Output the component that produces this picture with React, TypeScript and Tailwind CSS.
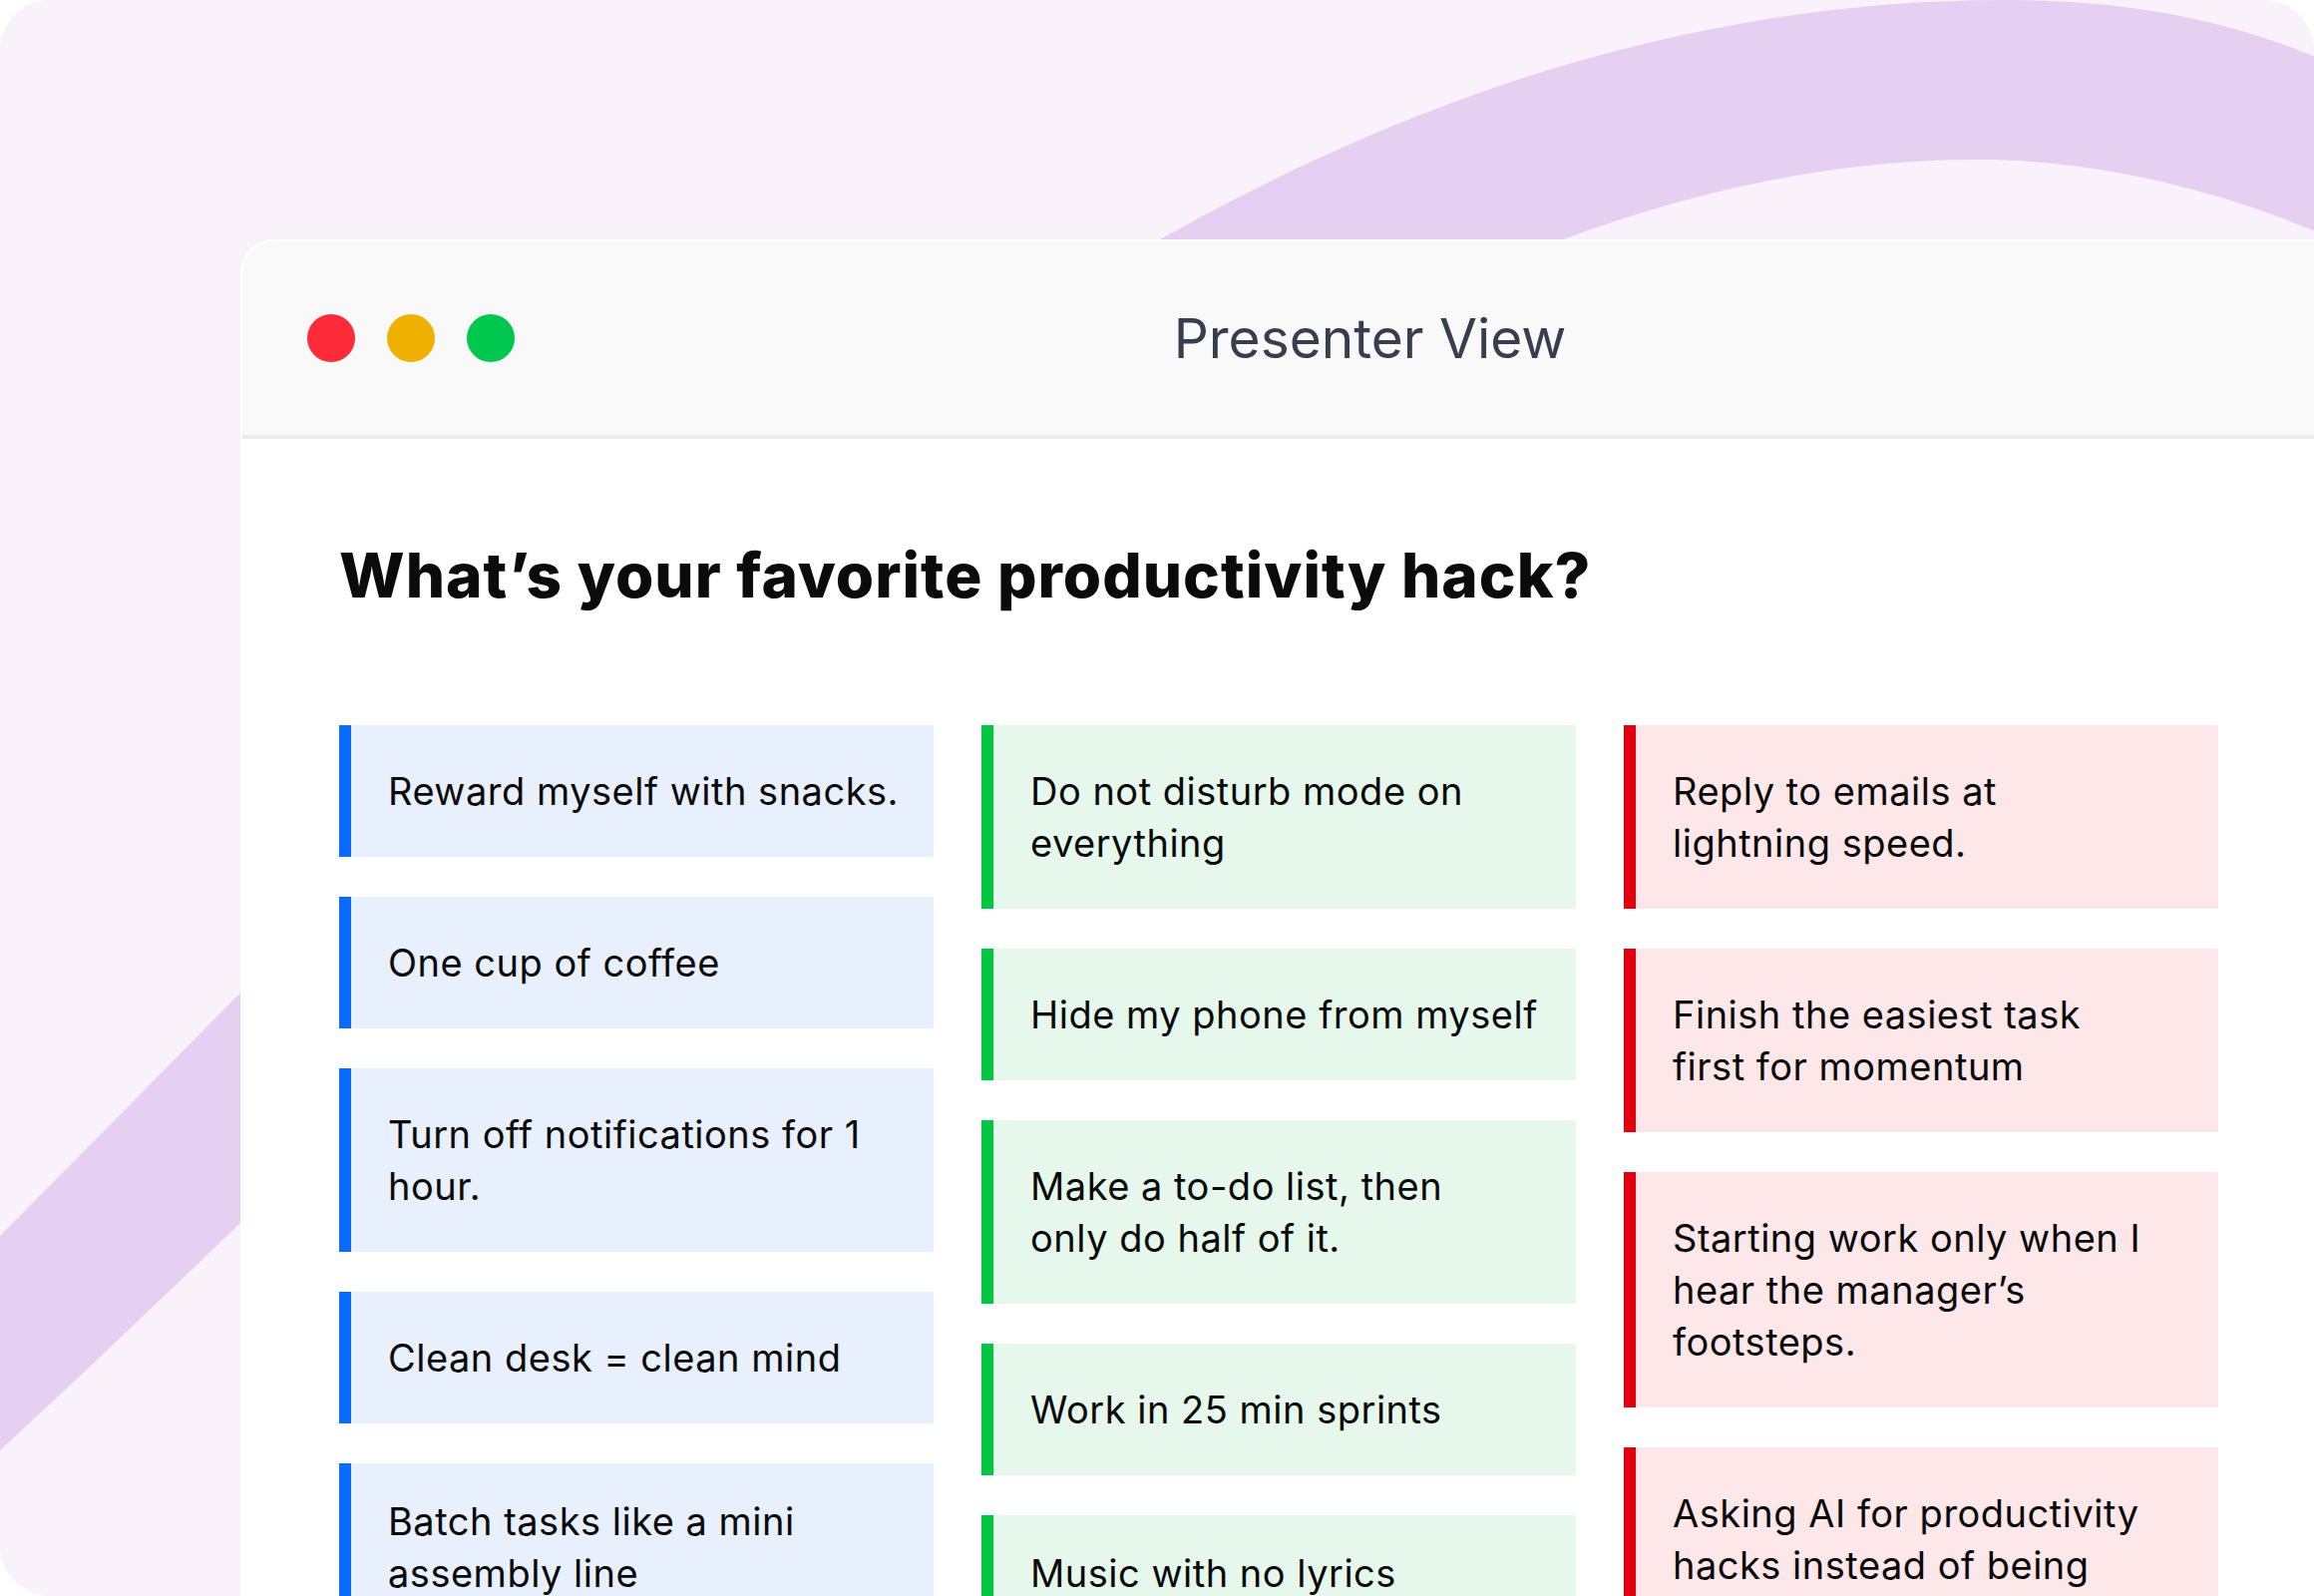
import { FC } from 'react';

type Tone = 'blue' | 'green' | 'red';

interface Answer {
    lines: string[];
    tight?: boolean;
}

interface Column {
    tone: Tone;
    items: Answer[];
}

const toneClass: Record<Tone, string> = {
    blue: 'border-[#0a6cff] bg-[#e8effd]',
    green: 'border-[#00c642] bg-[#e6f8ec]',
    red: 'border-[#e2000f] bg-[#fde7e9]',
};

const columns: Column[] = [
    {
        tone: 'blue',
        items: [
            { lines: ['Reward myself with snacks.'] },
            { lines: ['One cup of coffee'] },
            { lines: ['Turn off notifications for 1', 'hour.'] },
            { lines: ['Clean desk = clean mind'] },
            { lines: ['Batch tasks like a mini', 'assembly line'], tight: true },
        ],
    },
    {
        tone: 'green',
        items: [
            { lines: ['Do not disturb mode on', 'everything'] },
            { lines: ['Hide my phone from myself'] },
            { lines: ['Make a to-do list, then', 'only do half of it.'] },
            { lines: ['Work in 25 min sprints'] },
            { lines: ['Music with no lyrics'], tight: true },
        ],
    },
    {
        tone: 'red',
        items: [
            { lines: ['Reply to emails at', 'lightning speed.'] },
            { lines: ['Finish the easiest task', 'first for momentum'] },
            { lines: ['Starting work only when I', 'hear the manager\u2019s', 'footsteps.'] },
            { lines: ['Asking AI for productivity', 'hacks instead of being'] },
        ],
    },
];

// the lavender arch sweeping behind the window
const Backdrop: FC = () => (
    <svg className="absolute inset-0 h-full w-full" viewBox="0 0 2320 1600" preserveAspectRatio="none">
        <path
            d="M0 1239 C500 739 1150 0 2010 0 C2150 0 2250 25 2340 65 L2340 240 C2250 200 2120 160 1982 160 C1250 160 520 976 0 1454 Z"
            fill="#e6d0f1"
        />
    </svg>
);

const AnswerCard: FC<{ tone: Tone; answer: Answer }> = ({ tone, answer }) => (
    <div className={`border-l-[12px] pb-10 pl-[37px] pr-4 ${answer.tight ? 'pt-8' : 'pt-10'} ${toneClass[tone]}`}>
        {answer.lines.map((line) => (
            <div key={line} className="whitespace-nowrap text-[38px] leading-[52px] tracking-[0.5px] text-[#0a0a0a]">
                {line}
            </div>
        ))}
    </div>
);

const App: FC = () => {
    return (
        <div className="relative h-[1600px] w-[2320px] overflow-hidden bg-white font-['Inter','Liberation_Sans',sans-serif]">
            <div className="absolute inset-0 overflow-hidden rounded-[50px] bg-[#faf2fa]">
                <Backdrop />
            </div>

            <div className="relative pl-[241px] pt-[240px]">
                <div className="w-[2198px] overflow-hidden rounded-tl-[34px] border-l-2 border-t-2 border-white bg-white">
                    <div className="grid h-[198px] grid-cols-[1fr_auto_1fr] items-center border-b-4 border-[#ececec] bg-[#f9f9fa] pl-[65px]">
                        <div className="flex gap-8">
                            <span className="h-12 w-12 rounded-full bg-[#ff2b38]" />
                            <span className="h-12 w-12 rounded-full bg-[#efb000]" />
                            <span className="h-12 w-12 rounded-full bg-[#00c84f]" />
                        </div>
                        <div className="text-[55px] leading-none text-[#373e4f]">Presenter View</div>
                        <div />
                    </div>

                    <div className="pl-[97px] pt-[101px]">
                        <h1 className="text-[62px] font-extrabold leading-[72px] tracking-[1px] text-[#0b0b0b]">
                            What&rsquo;s your favorite productivity hack?
                        </h1>

                        <div className="mt-[114px] grid w-[1884px] grid-cols-3 gap-12">
                            {columns.map((col) => (
                                <div key={col.tone} className="flex flex-col gap-10">
                                    {col.items.map((answer) => (
                                        <AnswerCard key={answer.lines[0]} tone={col.tone} answer={answer} />
                                    ))}
                                </div>
                            ))}
                        </div>
                    </div>
                </div>
            </div>
        </div>
    );
};

export default App;
